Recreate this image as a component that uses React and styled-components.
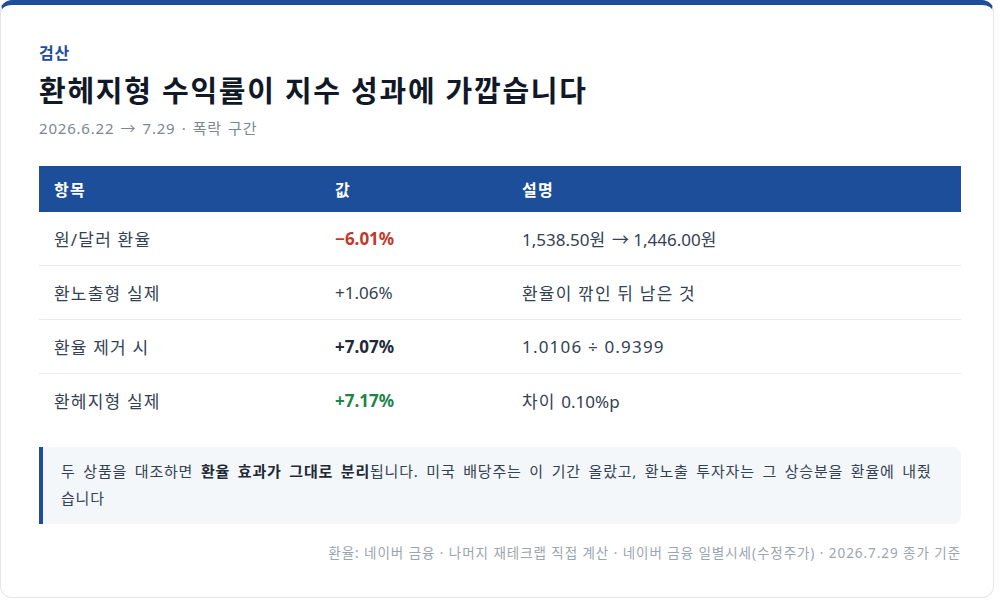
import React from 'react';
import styled, { createGlobalStyle } from 'styled-components';

const Num = styled.span`
  letter-spacing: 0;
`;

const rows = [
  {
    item: '원/달러 환율',
    value: '−6.01%',
    tone: 'down',
    desc: (
      <>
        <Num>1,538.50</Num>원 <Num>→ 1,446.00</Num>원
      </>
    )
  },
  { item: '환노출형 실제', value: '+1.06%', tone: 'plain', desc: '환율이 깎인 뒤 남은 것' },
  { item: '환율 제거 시', value: '+7.07%', tone: 'strong', desc: '1.0106 ÷ 0.9399' },
  {
    item: '환헤지형 실제',
    value: '+7.17%',
    tone: 'up',
    desc: (
      <>
        차이 <Num>0.10%p</Num>
      </>
    )
  }
];

const toneColor = {
  down: '#c0392b',
  up: '#1e8449',
  strong: '#1f2937',
  plain: '#334155'
};

function App() {
  return (
    <>
      <GlobalStyle />
      <Card>
        <Eyebrow>검산</Eyebrow>
        <Title>환헤지형 수익률이 지수 성과에 가깝습니다</Title>
        <Subtitle>2026.6.22 → 7.29 · 폭락 구간</Subtitle>

        <Table>
          <colgroup>
            <col style={{ width: 281 }} />
            <col style={{ width: 187 }} />
            <col />
          </colgroup>
          <thead>
            <tr>
              <Th>항목</Th>
              <Th>값</Th>
              <Th>설명</Th>
            </tr>
          </thead>
          <tbody>
            {rows.map(row => (
              <Row key={row.item}>
                <Td>{row.item}</Td>
                <ValueCell tone={row.tone}>{row.value}</ValueCell>
                <Td>{row.desc}</Td>
              </Row>
            ))}
          </tbody>
        </Table>

        <Callout>
          두 상품을 대조하면 <strong>환율 효과가 그대로 분리</strong>됩니다. 미국 배당주는 이 기간 올랐고,
          환노출 투자자는 그 상승분을 환율에 내줬습니다
        </Callout>

        <Footnote>
          환율: 네이버 금융 · 나머지 재테크랩 직접 계산 · 네이버 금융 일별시세(수정주가) · 2026.7.29 종가 기준
        </Footnote>
      </Card>
    </>
  );
}

const GlobalStyle = createGlobalStyle`
  body {
    margin: 0;
    background: #ffffff;
    font-family: 'Noto Sans', 'Noto Sans CJK KR', sans-serif;
  }
`;

const Card = styled.div`
  box-sizing: border-box;
  width: 994px;
  height: 598px;
  padding: 38px 32px 0 38px;
  background: #ffffff;
  border: 1px solid #e3e7ec;
  border-top: 5px solid #1d4e99;
  border-radius: 12px;
  letter-spacing: 0.05em;
`;

const Eyebrow = styled.div`
  font-size: 16px;
  font-weight: 700;
  line-height: 20px;
  color: #1d4e99;
`;

const Title = styled.h1`
  margin: 8px 0 0;
  font-size: 29px;
  font-weight: 700;
  line-height: 40px;
  letter-spacing: 0.06em;
  color: #111827;
`;

const Subtitle = styled.div`
  margin-top: 6px;
  font-size: 15px;
  line-height: 22px;
  color: #7b8794;
  word-spacing: 0.1em;
`;

const Table = styled.table`
  width: 100%;
  margin-top: 27px;
  table-layout: fixed;
  border-collapse: collapse;
  font-size: 17px;
  letter-spacing: 0.07em;
  color: #334155;
`;

const Th = styled.th`
  height: 46px;
  padding: 0 15px;
  text-align: left;
  font-size: 16px;
  font-weight: 700;
  color: #ffffff;
  background: #1d4e99;
`;

const Row = styled.tr`
  border-bottom: 1px solid #e8ebef;

  &:last-child { border-bottom: none; }
`;

const Td = styled.td`
  height: 53px;
  padding: 0 15px;
  color: #334155;
  white-space: nowrap;
`;

const ValueCell = styled(Td)`
  letter-spacing: 0;
  font-weight: ${props => (props.tone === 'plain' ? 400 : 700)};
  color: ${props => toneColor[props.tone]};
`;

const Callout = styled.div`
  margin-top: 20px;
  padding: 11px 24px 12px 18px;
  font-size: 15px;
  line-height: 27px;
  word-spacing: 0.2em;
  color: #334155;
  background: #f4f7fa;
  border-left: 4px solid #1d4e99;
  border-radius: 0 8px 8px 0;

  strong { color: #1f2937; }
`;

const Footnote = styled.div`
  margin-top: 19px;
  text-align: right;
  font-size: 13.5px;
  line-height: 20px;
  letter-spacing: 0.07em;
  color: #9aa5b1;
`;

export default App;
